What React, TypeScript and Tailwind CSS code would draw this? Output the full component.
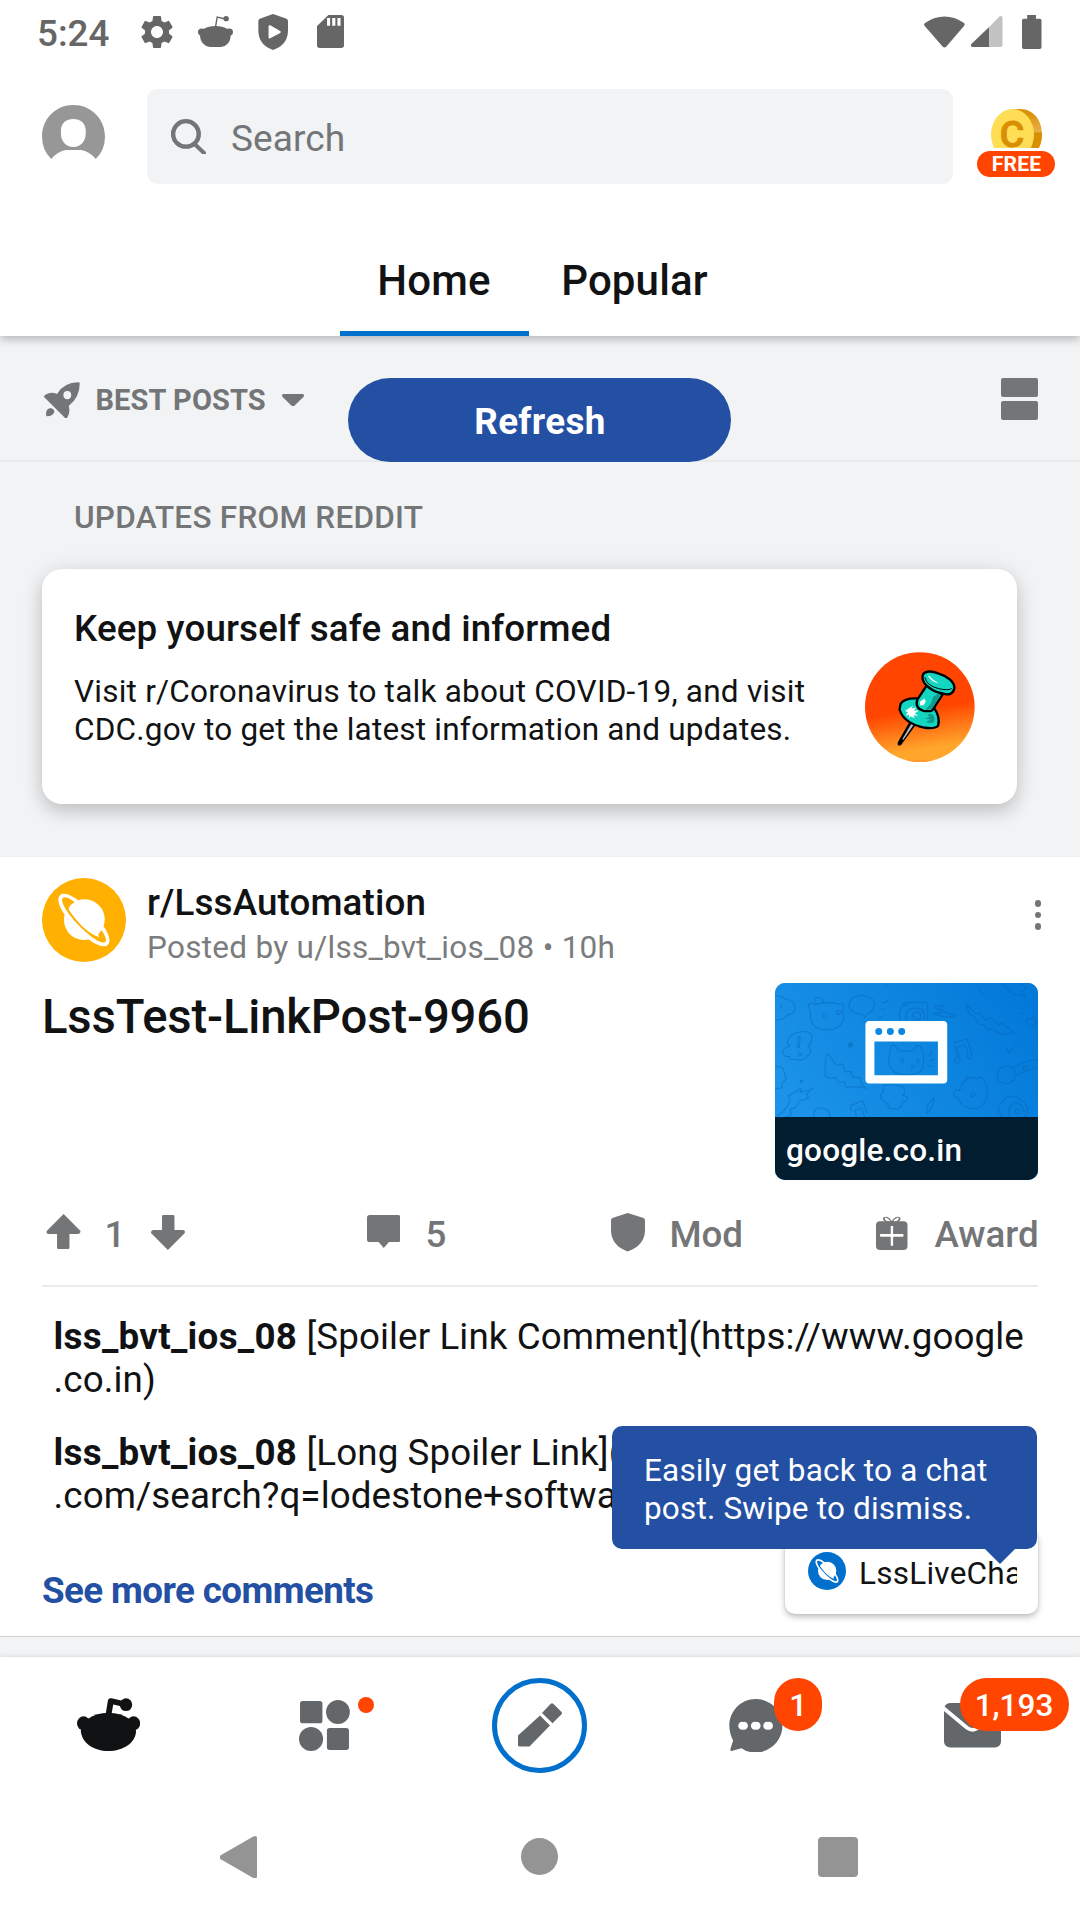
import React from "react";
import type { ReactNode } from "react";
import { MdSettings } from "react-icons/md";

type IconProps = { box: string; w: number; h: number; className?: string; children: ReactNode };

function Icon({ box, w, h, className = "", children }: IconProps) {
  return (
    <svg viewBox={box} width={w} height={h} preserveAspectRatio="none" fill="currentColor" className={"block shrink-0 " + className}>
      {children}
    </svg>
  );
}

function Planet({ size, color }: { size: number; color: string }) {
  return (
    <svg viewBox="0 0 84 84" width={size} height={size} className="block shrink-0">
      <circle cx="42" cy="42" r="42" fill={color} />
      <g transform="translate(42 42) rotate(46)">
        <circle r="20" fill="#fff" />
        <path fill="#fff" d="M-34.500 0C-34.500-7-20-11 0-11S34.500-7 34.500 0 20 11.500 0 11.500-34.500 7 -34.500 0Z" />
        <path fill={color} d="M-30.500 0C-30.500-4-20-7 0-7S30.500-4 30.500 0 18 7.500 0 7.500-30.500 4 -30.500 0Z" />
        <path fill="#fff" d="M-20-1A20 20 0 0 1 20-1Q21 1 23.500 1Q14 5.600 0 5.600Q-12 5.200-18.500 3.600Q-20 2-20-1Z" />
      </g>
    </svg>
  );
}

function StatusBar() {
  return (
    <div className="flex h-[63px] items-center text-[#666]">
      <span className="ml-[37px] w-[104px] pt-[5px] text-[36.75px] leading-[42px] font-medium">5:24</span>
      <MdSettings className="-ml-[4px] size-[40px] shrink-0" />
      <Icon box="574 47 102 94" w={35} h={31.5} className="ml-[21px]">
        <path d="M580 108Q583 77 625 77T669 108Q668 141 625 141T580 108Z" />
        <ellipse cx="585" cy="95" rx="11" ry="11" />
        <ellipse cx="665" cy="95" rx="11" ry="11" />
        <path d="M625 80L630 50L654 56" fill="none" stroke="currentColor" strokeWidth="4" />
        <ellipse cx="656" cy="55" rx="8" ry="8" />
      </Icon>
      <Icon box="748 41 88 108" w={30} h={36} className="ml-[25px]">
        <path fillRule="evenodd" d="M792 41L832 55Q836 57 836 62V92Q835 134 792 149Q750 134 749 92V62Q749 57 753 55ZM779 78V111Q779 116 784 114L813 98Q818 95 813 92L784 75Q779 73 779 78Z" />
      </Icon>
      <Icon box="922 45 78 99" w={27} h={33} className="ml-[29px]">
        <path fillRule="evenodd" d="M955 45H992Q1000 45 1000 53V136Q1000 144 992 144H930Q922 144 922 136V78ZM951 54V77H960V54ZM966 54V77H975V54ZM981 54V77H990V54Z" />
      </Icon>
      <Icon box="1115 41 120 97" w={41} h={32} className="mr-[6px] ml-auto">
        <path d="M1118 62Q1175 23 1232 62Q1236 66 1232 71L1180 134Q1175 139 1170 134L1117 71Q1113 66 1118 62Z" />
      </Icon>
      <Icon box="1251 47 92 94" w={31.5} h={31} className="mr-[19.500px]">
        <path d="M1304 80V141H1256Q1248 139 1252 132Z" />
        <path fill="#c2c2c2" d="M1304 80L1335 48Q1343 45 1343 53V135Q1343 141 1337 141H1304Z" />
      </Icon>
      <Icon box="1400 42 56 102" w={19.5} h={34} className="mr-[38.500px]">
        <path d="M1415 42H1440V53H1451Q1456 53 1456 58V139Q1456 144 1451 144H1405Q1400 144 1400 139V58Q1400 53 1405 53H1415Z" />
      </Icon>
    </div>
  );
}

function Header() {
  return (
    <header className="relative z-10 bg-white shadow-[0_3px_9px_rgba(0,0,0,0.27)]">
      <StatusBar />
      <div className="flex h-[163px] items-start pt-[26px]">
        <Icon box="122 315 183 162" w={63} h={54} className="mt-[16px] ml-[42px] text-[#979797]">
          <path
            fillRule="evenodd"
            d="M149 477Q122 450 122 410C122 355 163 315 213 315S305 355 305 410Q305 450 278 477Q260 454 235 450H192Q167 454 149 477ZM213 357C192 357 177 370 177 392V400C177 425 192 441 213 441S249 425 249 400V392C249 370 234 357 213 357Z"
          />
        </Icon>
        <div className="ml-[42px] flex h-[95px] w-[806px] items-center rounded-[11px] bg-[#f1f3f5] text-[#737577]">
          <Icon box="497 353 101 107" w={35} h={35.5} className="ml-[24px]">
            <ellipse cx="540" cy="398" rx="37" ry="38.500" fill="none" stroke="currentColor" strokeWidth="13" />
            <path d="M567 430L592 455" fill="none" stroke="currentColor" strokeWidth="12" strokeLinecap="round" />
          </Icon>
          <span className="ml-[25px] pt-[4px] text-[37px] leading-[43px] tracking-[0.1px]">Search</span>
        </div>
        <div className="mt-[20px] ml-[24px] flex w-[78px] flex-col items-center">
          <svg viewBox="0 0 51 39" width="51" height="39" className="block">
            <defs>
              <linearGradient id="coin-edge" x1="0" y1="0" x2="0" y2="1">
                <stop offset="0.05" stopColor="#d98f00" />
                <stop offset="0.45" stopColor="#e8b04c" />
                <stop offset="0.47" stopColor="#d98f00" />
              </linearGradient>
            </defs>
            <path fill="url(#coin-edge)" d="M21.500 0H29C42 0 51 11 51 25.500S42 51 29 51H21.500Z" />
            <ellipse cx="21.500" cy="25.500" rx="21.500" ry="25.500" fill="#ffdd55" />
            <text x="20.900" y="38.200" textAnchor="middle" fontFamily="Roboto" fontWeight="500" fontSize="37.500" fill="#d98f00" stroke="#d98f00" strokeWidth="1" strokeLinejoin="round">C</text>
          </svg>
          <div className="mt-[3px] h-[26px] w-[78px] rounded-full bg-[#ff4500] pl-px text-center text-[21px] leading-[27px] font-bold tracking-[0.2px] text-white">FREE</div>
        </div>
      </div>
      <nav className="ml-[340px] flex h-[110px] text-[42px] leading-[49px] font-medium text-[#111213]">
        <div className="relative flex w-[189px] items-center justify-center pr-px pb-[2px] tracking-[0.2px]">
          Home
          <div className="absolute inset-x-0 bottom-0 h-[5px] bg-[#0070cc]" />
        </div>
        <div className="flex w-[211px] items-center justify-center pb-[2px] tracking-[0.15px]">Popular</div>
      </nav>
    </header>
  );
}

function SortBar() {
  return (
    <div className="relative flex h-[126px] items-center border-b-2 border-[#e8eaec] pt-[4px] text-[#737577]">
      <Icon box="128 485 105 110" w={36} h={36.5} className="ml-[44px]">
        <path fillRule="evenodd" d="M228 486Q233 486 232 491Q232 532 200 557Q206 578 195 594L190 594L128 530Q128 526 133 523Q148 513 166 521Q185 487 228 486ZM196 512A11 12 0 1 0 196 537A11 12 0 1 0 196 512Z" />
        <path d="M134 583Q133 565 147 563Q160 567 158 576Q152 589 136 588Q134 587 134 583Z" />
      </Icon>
      <span className="ml-[15.500px] text-[29px] leading-[34px] font-bold tracking-[0.1px]">BEST POSTS</span>
      <Icon box="820 521 63 38" w={22} h={12.5} className="ml-[16.500px]">
        <path d="M824 521H879Q885 523 882 529L856 556Q851 561 847 556L821 529Q818 523 824 521Z" />
      </Icon>
      <div className="mr-[42px] mb-[2px] ml-auto flex flex-col gap-[4.500px]">
        <div className="h-[18.500px] w-[37px] rounded-[2px] bg-[#737577]" />
        <div className="h-[18.500px] w-[37px] rounded-[2px] bg-[#737577]" />
      </div>
      <button className="absolute top-[42px] left-[348px] h-[84px] w-[383px] rounded-full bg-[#2450a4] pt-[2px] pl-px text-[36.75px] leading-[43px] font-bold tracking-[0.35px] text-white">
        Refresh
      </button>
    </div>
  );
}

function PushPin() {
  return (
    <svg viewBox="495 305 331 331" width="110" height="110" className="block shrink-0">
      <defs>
        <linearGradient id="sunset" x1="0.42" y1="0" x2="0.58" y2="1">
          <stop offset="0.52" stopColor="#ff4500" />
          <stop offset="0.88" stopColor="#ffa62b" />
        </linearGradient>
        <linearGradient id="sunset-rim" x1="0" y1="0" x2="0" y2="1">
          <stop offset="0.980" stopColor="#ff8717" stopOpacity="0" />
          <stop offset="1" stopColor="#ff8717" />
        </linearGradient>
      </defs>
      <circle cx="660" cy="470.500" r="165" fill="url(#sunset)" />
      <circle cx="660" cy="470.500" r="165" fill="url(#sunset-rim)" />
      <path d="M629 515L595 574Q590 585 598 587Q605 587 608 579L648 524Z" fill="#000" />
      <path d="M634 522L608 566Q607 571 611 568L641 525Z" fill="#b9bec4" />
      <path d="M602 461Q614 443 654 445L703 473Q722 501 715 527Q705 537 676 533Q612 521 599 478Z" fill="#14d6c0" stroke="#000" strokeWidth="7" strokeLinejoin="round" />
      <path d="M682 493Q705 486 704 510Q700 524 679 516L692 508L676 505L690 500Z" fill="#10998c" />
      <path d="M616 482L640 466L634 476L650 471L642 481L657 481L645 490L655 497L641 495L644 504L632 498L627 505L627 494L617 496L624 487Z" fill="#fff" />
      <path d="M683 402L652 449Q645 475 671 482Q689 485 698 480L728 434Z" fill="#14d6c0" stroke="#000" strokeWidth="7" strokeLinejoin="round" />
      <path d="M701 439L717 430L723 436L694 477L676 479L693 461Z" fill="#10998c" />
      <path d="M660 455L674 445L678 454L671 465L661 465Z" fill="#fff" />
      <path d="M668 379C669 363 690 359 717 370C744 378 765 396 764 414C760 432 746 437 727 429C704 427 666 404 668 379Z" fill="#14d6c0" stroke="#000" strokeWidth="7" />
      <path d="M675 381Q681 407 716 415Q744 422 756 415" fill="none" stroke="#000" strokeWidth="3" />
      <path d="M687 374Q698 389 718 399Q697 396 686 380Z" fill="#fff" />
    </svg>
  );
}

function Updates() {
  return (
    <section className="border-b border-[#eceeef] pb-[52px]">
      <h2 className="flex h-[107px] items-center pt-[3px] pl-[74px] text-[31.5px] leading-[37px] font-medium tracking-[0.25px] text-[#737577]">
        UPDATES FROM REDDIT
      </h2>
      <div className="ml-[42px] flex h-[235px] w-[975px] items-start rounded-[20px] bg-white pl-[32px] text-[#111213] shadow-[0_8px_18px_rgba(0,0,0,0.17),0_1px_26px_rgba(0,0,0,0.07)]">
        <div className="w-[791px] pt-[38px]">
          <h3 className="text-[36.75px] leading-[43px] font-medium tracking-[0.13px]">Keep yourself safe and informed</h3>
          <p className="mt-[23px] text-[31.5px] leading-[38px] tracking-[0.23px]">
            Visit r/Coronavirus to talk about COVID-19, and visit
            <br />
            <span className="tracking-[0.2px]">CDC.gov to get the latest information and updates.</span>
          </p>
        </div>
        <div className="pt-[83px]">
          <PushPin />
        </div>
      </div>
    </section>
  );
}

const doodles = [
  "M105 409Q125 405 135 417Q160 418 166 440Q166 462 143 464Q128 485 105 478M124 434V446",
  "M211 452Q204 440 207 432Q218 426 225 434Q262 423 296 432Q310 425 312 440Q306 450 309 462Q314 480 307 486Q296 510 262 509Q222 510 213 482ZM247 468Q253 452 261 468Q254 482 247 468M289 458Q294 444 303 458Q296 470 289 458M225 427Q222 412 240 413Q250 416 252 427",
  "M369 464Q328 460 327 435Q330 409 368 406Q403 410 405 434Q400 456 380 464L374 473Z",
  "M483 480Q474 460 485 446Q486 430 505 427H560Q566 430 564 480M500 480Q494 444 530 444Q560 446 554 480M520 470Q518 456 532 456Q545 458 544 474Q534 486 520 470M492 436L506 434",
  "M585 439L612 436L604 448L628 462L648 464L647 470Q610 475 582 459L607 458Z",
  "M680 433L710 462L722 459L736 480L755 474L778 494L788 490L823 518Q800 528 775 518L758 506L745 509L732 494L716 492L705 470Q688 467 680 433Z",
  "M790 373L822 403L860 409L848 392L862 385L840 371",
  "M164 520Q200 508 214 524Q220 548 206 557Q220 580 200 589Q190 606 166 598Q144 602 150 590Q126 592 128 574Q136 560 150 560Q130 540 164 520ZM176 532L181 530L178 564L172 562ZM174 584Q179 574 185 584Q179 592 174 584",
  "M262 580Q254 610 256 630Q252 655 270 655L290 654L296 668L312 666L320 684Q350 676 378 686Q362 672 360 652L340 653L332 635L316 636L308 612L290 616Z",
  "M105 620Q132 618 131 632L139 658Q124 666 126 684L105 688",
  "M452 570Q454 552 464 556L480 574H515L535 556Q545 556 550 580Q556 615 545 634Q524 646 496 645Q450 644 447 600ZM480 600L488 596L492 606L482 605M530 598L538 602L534 612M512 618L522 616L514 630M568 590L577 574M570 604L582 598M564 616L580 620",
  "M655 596Q644 566 645 548L682 537L696 576Q700 598 688 596Q676 592 686 578L676 556L652 562L662 600Q660 614 646 608Q642 598 655 596",
  "M802 564L808 580L824 561M778 630Q790 612 822 624Q834 650 822 662Q800 680 778 664Q770 646 778 630M824 620Q870 598 895 600M828 646L895 622M852 620Q864 612 862 628Q852 636 852 620",
  "M672 665Q690 648 712 656Q725 646 732 660Q750 690 742 712Q730 750 695 747Q660 742 656 712Q642 716 642 700Q650 685 660 692ZM692 706Q700 694 708 704Q700 716 692 706M680 664Q674 648 690 650",
  "M430 678Q462 670 492 682Q500 700 488 706Q510 710 502 722Q480 726 488 736Q476 752 460 746Q440 748 446 730Q422 724 422 704Q434 700 430 678Z",
  "M218 684L200 704L206 716L180 722L165 744L150 748L154 766L142 771M218 688L180 698L184 686L145 708L150 726L132 754L112 768",
  "M222 771Q218 748 240 744Q272 746 270 771M334 752L332 738L368 722L382 760M350 771L346 752L366 744L374 771M560 758Q562 730 582 714Q586 730 564 760Z",
  "M780 738Q790 720 802 710Q838 704 864 740Q868 762 855 771M776 744Q784 780 820 790M812 771Q800 744 828 726Q848 734 855 756M826 750Q838 744 842 760Q826 768 826 750",
  "M860 482Q872 470 888 476Q896 490 880 502Q860 496 860 482M436 378L442 376M842 462L856 459M720 390L730 402M592 412L595 409M430 428L445 422M426 448L432 446M416 474L426 470",
  "M245 800Q225 790 222 771M262 796L272 840M440 830Q444 790 476 786Q508 792 514 830M600 771L606 800L640 812L656 850M700 830L735 815L742 850M790 910Q830 890 850 904V940",
];

function Thumbnail() {
  return (
    <div className="relative h-[197px] w-[263px] overflow-hidden rounded-[10px] bg-gradient-to-r from-[#1a92e8] to-[#057bdb]">
      <svg viewBox="105 369 791 592" width="263" height="197" preserveAspectRatio="none" className="block">
        <defs>
          <linearGradient id="sky" x1="0" y1="0.7" x2="1" y2="0.2">
            <stop offset="0.1" stopColor="#1b93e8" />
            <stop offset="1" stopColor="#037ad9" />
          </linearGradient>
        </defs>
        <rect x="105" y="369" width="791" height="592" fill="url(#sky)" />
        <g fill="none" stroke="#075fae" strokeOpacity="0.42" strokeWidth="3.200" strokeLinejoin="round" strokeLinecap="round">
          {doodles.map((d) => (
            <path key={d} d={d} />
          ))}
        </g>
        <g fill="#075fae" fillOpacity="0.4">
          <circle cx="332" cy="555" r="8" />
          <circle cx="184" cy="665" r="5" />
        </g>
        <path
          fill="#fff"
          fillRule="evenodd"
          d="M389 483H611Q623 483 623 495V659Q623 671 611 671H389Q377 671 377 659V495Q377 483 389 483ZM404 545V646H595V545ZM417 504A10 10 0 1 0 417 525A10 10 0 1 0 417 504M452 504A10 10 0 1 0 452 525A10 10 0 1 0 452 504M486 504A10 10 0 1 0 486 525A10 10 0 1 0 486 504"
        />
      </svg>
      <div className="absolute inset-x-0 bottom-0 h-[63px] bg-[#031b2c]/98 pt-[14.500px] pl-[11px] text-[31.5px] leading-[38px] font-medium tracking-[0.2px] text-white">
        google.co.in
      </div>
    </div>
  );
}

function Actions() {
  return (
    <div className="flex h-[105px] items-center pl-[46px] text-[36.75px] leading-[43px] font-medium text-[#737577]">
      <Icon box="66 102 50 105" w={34.5} h={35} className="-mt-[2px]">
        <path d="M91.500 102L116 153Q116 162 112 162H100V203Q100 207 98 207H84Q82 207 82 203V162H70Q66 162 67 153Z" />
      </Icon>
      <span className="ml-[24px] w-[21px] pt-[4px]">1</span>
      <Icon box="219 105 50 105" w={34.5} h={35} className="ml-[25.500px]">
        <path d="M243.500 210L268 159Q269 150 265 150H253V109Q253 105 251 105H237Q235 105 235 109V150H223Q219 150 219 159Z" />
      </Icon>
      <Icon box="533 105 49 100" w={33.5} h={33} className="-mt-[2px] ml-[181px]">
        <path d="M537 105H578Q582 105 582 113V179Q582 187 578 187H565L557.500 205L550 187H537Q533 187 533 179V113Q533 105 537 105Z" />
      </Icon>
      <span className="ml-[25.500px] w-[21px] pt-[4px]">5</span>
      <Icon box="887 98 49 115" w={34} h={38.5} className="ml-[164px]">
        <path d="M911 98L934 113Q936 115 936 120V148Q936 195 911 213Q887 195 887 148V120Q887 115 889 113Z" />
      </Icon>
      <span className="ml-[25px] w-[71px] pt-[4px] tracking-[-0.1px]">Mod</span>
      <Icon box="1272 105 46 102" w={31.5} h={34} className="ml-[135.500px]">
        <path fillRule="evenodd" d="M1278 121H1312Q1318 121 1318 133V195Q1318 207 1312 207H1278Q1272 207 1272 195V133Q1272 121 1278 121ZM1293.500 135V159H1278V167H1293.500V194H1297V167H1312V159H1297V135Z" />
        <path d="M1294 124C1280 122 1282 105 1288 109Q1293 115 1295 124Q1297 115 1302 109C1308 105 1310 122 1296 124" fill="none" stroke="currentColor" strokeWidth="2.600" />
      </Icon>
      <span className="ml-[27px] pt-[4px]">Award</span>
    </div>
  );
}

function Post() {
  return (
    <article className="h-[780px] border-b border-[#ccd0d2] bg-white text-[#111213]">
      <div className="flex h-[126px] items-start pt-[21px] pl-[42px]">
        <Planet size={84} color="#ffb000" />
        <div className="ml-[21px] grow">
          <div className="mt-[3px] text-[36.75px] leading-[43px] font-medium tracking-[0.13px]">r/LssAutomation</div>
          <div className="mt-[5px] text-[31.5px] leading-[38px] tracking-[0.28px] text-[#7a7c7e]">Posted by u/lss_bvt_ios_08 • 10h</div>
        </div>
        <div className="mt-[22px] mr-[39px] flex flex-col gap-[5px]">
          <div className="size-[6.500px] rounded-full bg-[#737577]" />
          <div className="size-[6.500px] rounded-full bg-[#737577]" />
          <div className="size-[6.500px] rounded-full bg-[#737577]" />
        </div>
      </div>
      <div className="flex items-start justify-between pr-[42px] pl-[42px]">
        <h1 className="pt-[7px] text-[47.25px] leading-[55px] font-medium tracking-[-0.15px]">LssTest-LinkPost-9960</h1>
        <Thumbnail />
      </div>
      <Actions />
      <div className="mx-[42px] h-[2px] bg-[#ebebeb]" />
      <div className="flex flex-col gap-[30px] pt-[28px] pl-[53.500px] text-[36.75px] leading-[43px] tracking-[0.1px]">
        <p className="whitespace-nowrap">
          <b className="font-bold tracking-[0.3px]">lss_bvt_ios_08</b> [Spoiler Link Comment](https://www.google
          <br />
          .co.in)
        </p>
        <p className="whitespace-nowrap">
          <b className="font-bold tracking-[0.3px]">lss_bvt_ios_08</b> [Long Spoiler Link](https://www.google
          <br />
          .com/search?q=lodestone+software
        </p>
      </div>
      <div className="mt-[52px] pl-[42px] text-[36.75px] leading-[43px] font-bold tracking-[-0.6px] text-[#2450a4]">See more comments</div>
    </article>
  );
}

function ChatTip() {
  return (
    <div className="absolute top-[1426px] right-[42px] z-20 flex flex-col items-end">
      <div className="relative z-10 mr-px h-[123px] w-[425px] rounded-[10px] bg-[#2450a4] pt-[26px] pl-[32px] text-[31.5px] leading-[38px] tracking-[0.18px] text-white">
        Easily get back to a chat
        <br />
        post. Swipe to dismiss.
        <Icon box="0 0 30 15" w={30} h={15} className="absolute top-full left-[373px] text-[#2450a4]">
          <path d="M0 0H30L15 15Z" />
        </Icon>
      </div>
      <div className="-mt-[20px] flex h-[85px] w-[253px] items-start rounded-[10px] bg-white pt-[23px] pl-[23px] text-[#111213] shadow-[0_3px_6px_rgba(0,0,0,0.25),0_0_2px_rgba(0,0,0,0.12)]">
        <Planet size={38} color="#0070cc" />
        <span className="ml-[12px] w-[159px] overflow-hidden pt-[3px] pl-px text-[31.5px] leading-[38px] tracking-[0.25px] whitespace-nowrap">LssLiveChat</span>
      </div>
    </div>
  );
}

function BottomNav() {
  return (
    <nav className="relative z-10 grid h-[137px] grid-cols-5 items-center justify-items-center bg-white text-[#63676a] shadow-[0_0_5px_rgba(0,0,0,0.14)]">
      <Icon box="224 414 184 159" w={63.5} h={53} className="ml-px -mt-[2px] text-[#111213]">
        <path d="M235 512Q236 495 256 476Q280 458 315 458T375 476Q396 495 395 515C393 548 358 573 315 573S237 548 235 512Z" />
        <ellipse cx="243" cy="490" rx="19" ry="21" />
        <ellipse cx="388" cy="490" rx="19" ry="21" />
        <path d="M315 466L322 423L362 433" fill="none" stroke="currentColor" strokeWidth="17" strokeLinejoin="round" />
        <ellipse cx="366" cy="434" rx="18" ry="19" />
      </Icon>
      <div className="relative">
        <Icon box="868 420 148 153" w={51} h={51}>
          <rect x="871" y="423" width="65" height="67" rx="8" />
          <ellipse cx="981" cy="456" rx="34.500" ry="36" />
          <ellipse cx="903" cy="537" rx="35" ry="36" />
          <rect x="949" y="504" width="64" height="66" rx="8" />
        </Icon>
        <div className="absolute -top-[3px] left-[59px] size-[16px] rounded-full bg-[#ff4500]" />
      </div>
      <div className="mr-[2px] flex size-[95px] items-center justify-center rounded-full border-[5px] border-[#0070cc]">
        <Icon box="0 0 44 44" w={44} h={44} className="ml-px -mt-px">
          <path d="M22 12.500L32 22.500L11.500 43.500H1.500Q0 43.500 0 42V32.500Z" />
          <path d="M32.500 1Q34 -0.300 35.500 1L43.300 8.700Q44.700 10 43.300 11.500L34.500 20.200L24 10Z" />
        </Icon>
      </div>
      <div className="relative">
        <Icon box="551 176 156 161" w={53.5} h={53.5}>
          <path fillRule="evenodd" d="M629 176C672 176 707 212 707 256S672 337 629 337Q605 337 587 324L561 332Q554 333 555 327L563 301Q552 280 552 256C552 212 586 176 629 176ZM592 245A11 12 0 1 0 592 268A11 12 0 1 0 592 245M629 245A11 12 0 1 0 629 268A11 12 0 1 0 629 245M665 245A11 12 0 1 0 665 268A11 12 0 1 0 665 245" />
        </Icon>
        <div className="absolute -top-[21px] left-[45px] h-[53px] w-[48px] rounded-full bg-[#ff4500] text-center text-[31.5px] leading-[56px] font-medium text-white">1</div>
      </div>
      <div className="relative">
        <Icon box="1173 190 166 133" w={57} h={44.5}>
          <rect x="1173" y="190" width="166" height="133" rx="18" />
          <path d="M1170 204L1240 264Q1256 276 1272 264L1342 204" fill="none" stroke="#fff" strokeWidth="11" />
        </Icon>
        <div className="absolute -top-[25px] left-[16px] h-[53px] w-[109px] rounded-full bg-[#ff4500] text-center text-[31.5px] leading-[56px] font-medium text-white">1,193</div>
      </div>
    </nav>
  );
}

function SystemNav() {
  return (
    <div className="relative z-10 flex h-[126px] items-center bg-white text-[#949494]">
      <Icon box="639 827 107 128" w={37} h={42.5} className="ml-[220px]">
        <path d="M641 885L734 829Q746 824 746 834V948Q746 958 734 953L641 897Q636 891 641 885Z" />
      </Icon>
      <div className="mb-px ml-[264px] size-[37px] rounded-full bg-[#949494]" />
      <div className="mb-px ml-[260px] size-[40px] rounded-[4px] bg-[#949494]" />
    </div>
  );
}

export default function App() {
  return (
    <div className="relative flex h-[1920px] w-[1080px] flex-col overflow-hidden bg-[#f1f3f5] font-['Roboto',sans-serif]">
      <Header />
      <SortBar />
      <Updates />
      <Post />
      <div className="h-[20px] shrink-0" />
      <BottomNav />
      <SystemNav />
      <ChatTip />
    </div>
  );
}
